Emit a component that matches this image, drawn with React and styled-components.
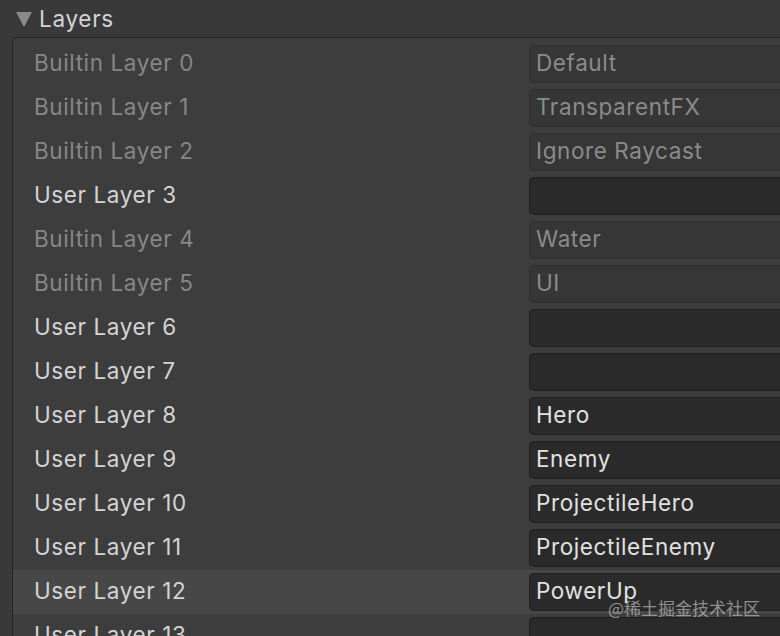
import React from "react";
import styled, { createGlobalStyle } from "styled-components";

const GlobalStyle = createGlobalStyle`
  html, body {
    margin: 0;
    padding: 0;
    background: #393939;
    font-family: Inter, "Noto Sans", sans-serif;
    overflow: hidden;
  }
`;

const Page = styled.div`
  position: relative;
  width: 780px;
  height: 636px;
  overflow: hidden;
  background: #393939;
`;

const Header = styled.div`
  display: flex;
  align-items: center;
  height: 37px;
  padding-left: 16px;
  gap: 7px;
  color: #d4d4d4;
  font-size: 22.5px;
  letter-spacing: 0.7px;
`;

const Arrow = styled.span`
  width: 0;
  height: 0;
  border-left: 8px solid transparent;
  border-right: 8px solid transparent;
  border-top: 15px solid #8a8a8a;
  margin-top: 1px;
`;

const Panel = styled.div`
  margin-left: 12px;
  padding-top: 4px;
  background: #3d3d3d;
  border: 1px solid #242424;
  border-right: none;
  border-bottom: none;
  border-radius: 5px 0 0 0;
`;

const Row = styled.div`
  display: grid;
  grid-template-columns: 516px 1fr;
  align-items: center;
  height: 44px;
  background: ${({ $active }) => ($active ? "#474747" : "transparent")};
`;

const Label = styled.div`
  padding-left: 21px;
  padding-bottom: 3px;
  font-size: 22.5px;
  letter-spacing: 0.6px;
  color: ${({ $disabled }) => ($disabled ? "#878787" : "#d4d4d4")};
`;

const Field = styled.div`
  box-sizing: border-box;
  height: 38px;
  display: flex;
  align-items: center;
  padding-left: 6px;
  padding-bottom: 3px;
  font-size: 22.5px;
  letter-spacing: 0.6px;
  border-radius: 5px 0 0 5px;
  border: 1px solid ${({ $disabled }) => ($disabled ? "#2d2d2d" : "#1f1f1f")};
  border-right: none;
  background: ${({ $disabled }) => ($disabled ? "#363636" : "#2a2a2a")};
  color: ${({ $disabled }) => ($disabled ? "#8b8b8b" : "#e2e2e2")};
`;

const Watermark = styled.div`
  position: absolute;
  right: 20px;
  top: 595px;
  font-size: 17px;
  color: rgba(230, 230, 230, 0.55);
  font-family: "Noto Sans CJK SC", sans-serif;
`;

const layers = [
  { label: "Builtin Layer 0", value: "Default", disabled: true },
  { label: "Builtin Layer 1", value: "TransparentFX", disabled: true },
  { label: "Builtin Layer 2", value: "Ignore Raycast", disabled: true },
  { label: "User Layer 3", value: "" },
  { label: "Builtin Layer 4", value: "Water", disabled: true },
  { label: "Builtin Layer 5", value: "UI", disabled: true },
  { label: "User Layer 6", value: "" },
  { label: "User Layer 7", value: "" },
  { label: "User Layer 8", value: "Hero" },
  { label: "User Layer 9", value: "Enemy" },
  { label: "User Layer 10", value: "ProjectileHero" },
  { label: "User Layer 11", value: "ProjectileEnemy" },
  { label: "User Layer 12", value: "PowerUp", active: true },
  { label: "User Layer 13", value: "" },
];

const App = () => {
  return (
    <Page>
      <GlobalStyle />
      <Header>
        <Arrow />
        <span>Layers</span>
      </Header>
      <Panel>
        {layers.map((l) => (
          <Row key={l.label} $active={l.active}>
            <Label $disabled={l.disabled}>{l.label}</Label>
            <Field $disabled={l.disabled}>{l.value}</Field>
          </Row>
        ))}
      </Panel>
      <Watermark>@稀土掘金技术社区</Watermark>
    </Page>
  );
};

export default App;
